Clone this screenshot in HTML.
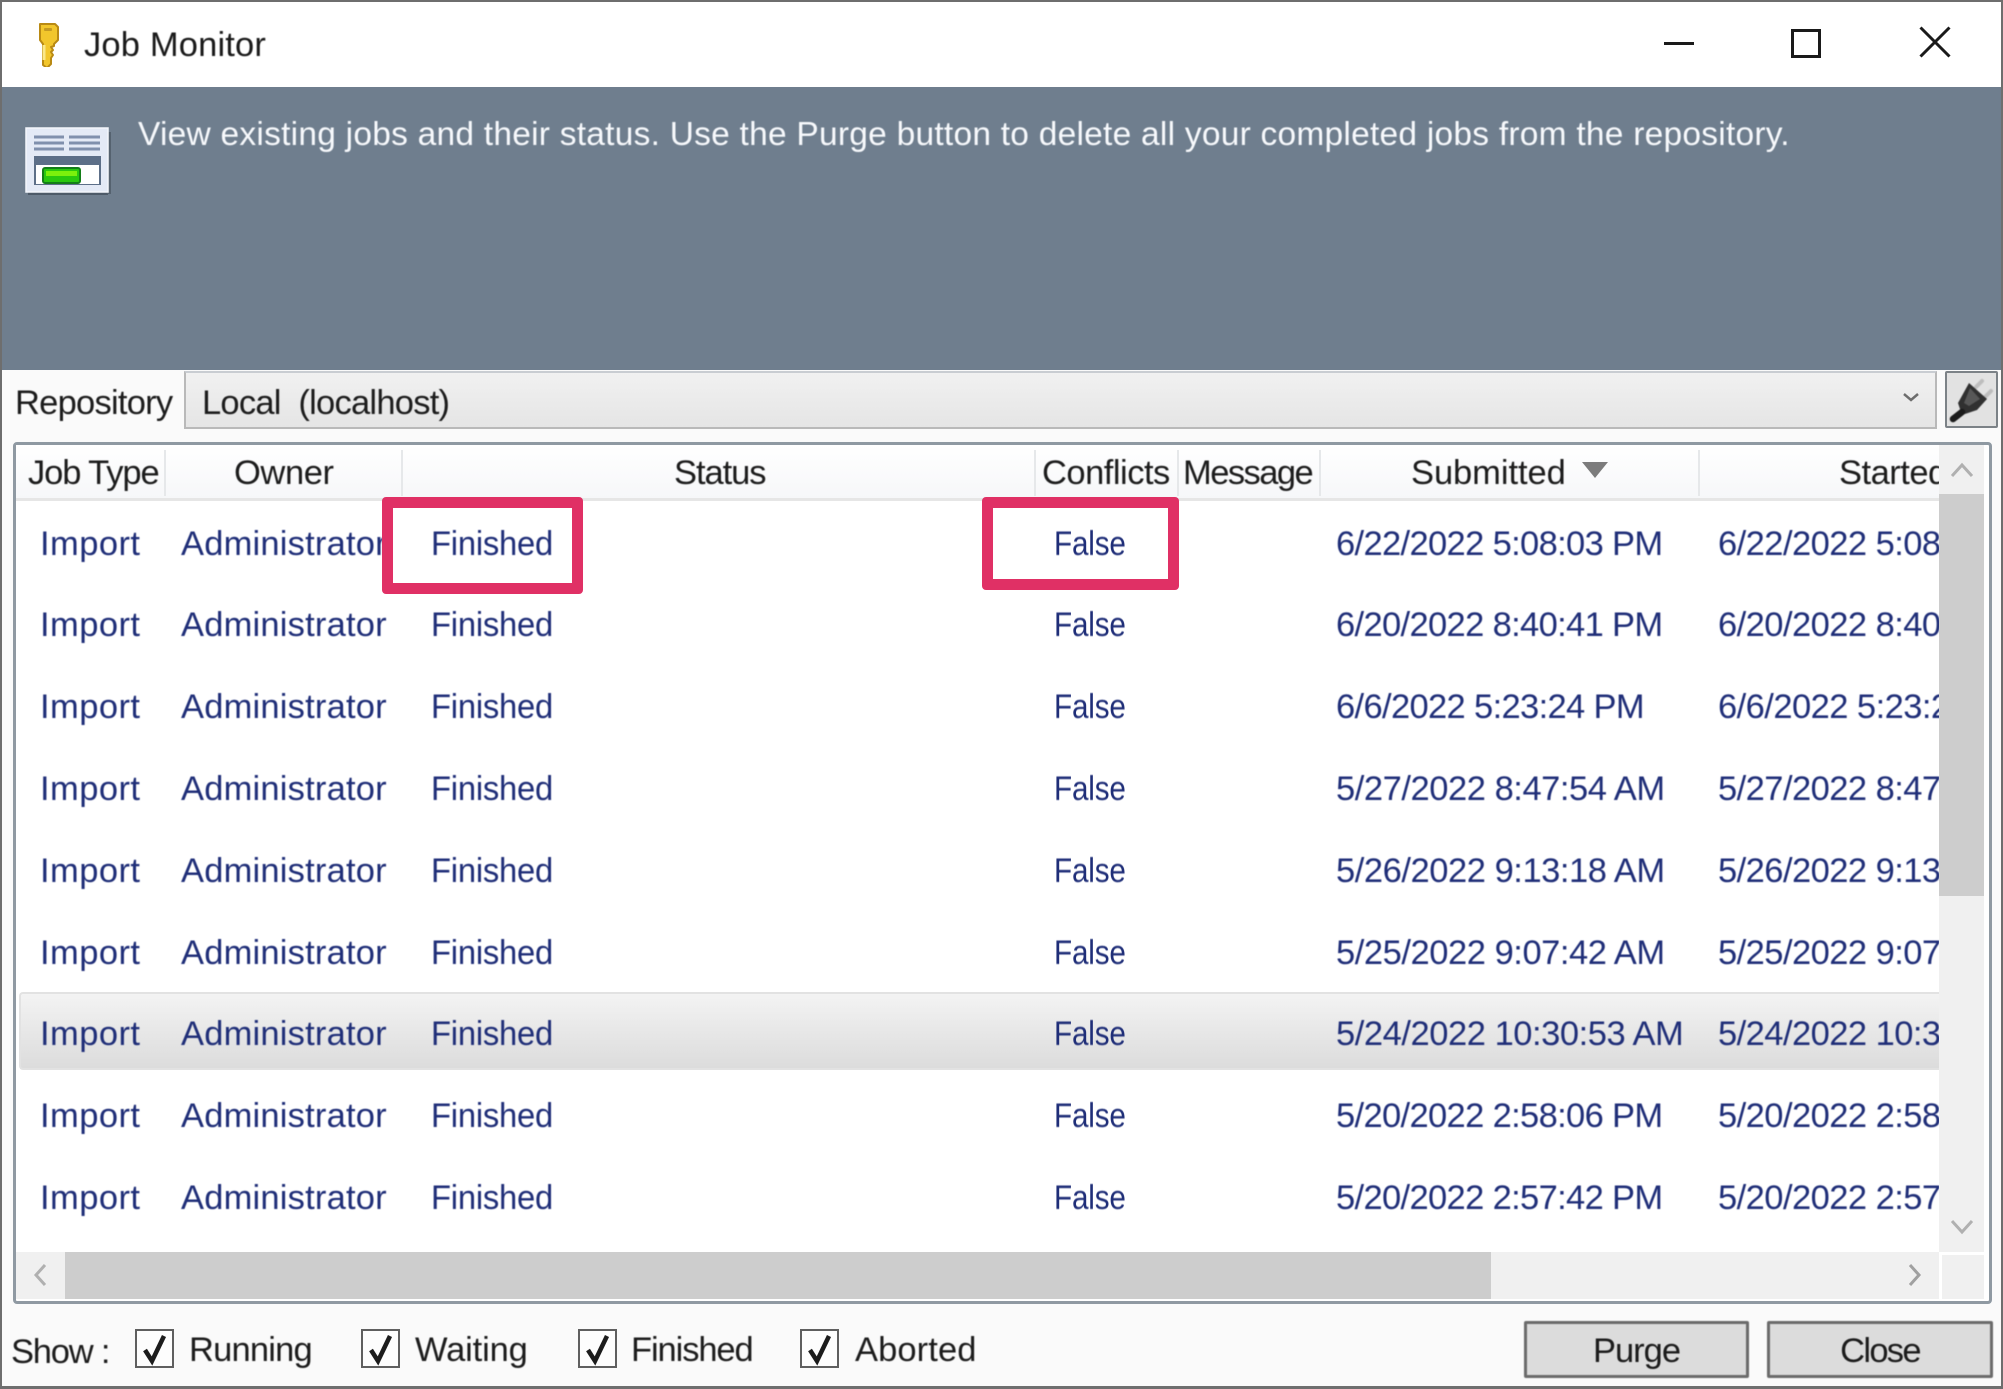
<!DOCTYPE html>
<html lang="en"><head><meta charset="utf-8"><title>Job Monitor</title>
<style>
html,body{margin:0;padding:0;background:#fafafa}
#w{position:relative;width:2003px;height:1389px;overflow:hidden;background:#fafafa;font-family:"Liberation Sans",sans-serif;font-size:34.5px;color:#1c1c1c}
#w div,#w svg{position:absolute}
.t{white-space:nowrap;line-height:44px;height:44px;filter:blur(.45px)}
.r{left:0;width:1939px;height:44px;color:#1f2e78;overflow:hidden}
.r .t{top:1px}
.a{left:40px;letter-spacing:.44px}.b{left:181px;letter-spacing:.2px}.c{left:431px;letter-spacing:-.25px;transform:scaleX(.95);transform-origin:0 50%}.d{left:1054px;letter-spacing:-.2px;transform:scaleX(.86);transform-origin:0 50%}.e{left:1336px;letter-spacing:-.65px}.f{left:1718px;letter-spacing:-.55px}
.m{letter-spacing:-.45px}
.sep{top:450px;width:2px;height:46px;background:#e6e8ea}
.cb{width:35px;height:35px;border:2.5px solid #5f5f5f;background:#fdfdfd;box-sizing:content-box}
.btn{top:1321px;height:51px;background:#dcdcdc;border:3px solid #6b6b6b;border-radius:2px;text-align:center;line-height:54px;filter:blur(.45px)}
.box{border:11px solid #e03065;border-radius:4px;box-sizing:border-box}
</style></head><body>
<div id="w">
<!-- window frame -->
<div style="left:0;top:0;width:2003px;height:2px;background:#6e6e6e"></div>
<div style="left:0;top:2px;width:2003px;height:85px;background:#fff"></div>
<div style="left:0;top:87px;width:2003px;height:283px;background:#6f7e8e"></div>
<!-- key icon -->
<svg style="left:35px;top:21px" width="26" height="46" viewBox="0 0 26 46"><path d="M5 3h15l3 3v13l-4 4v2l-3 1 2 3-2 2 2 3-2 3v6l-4 4-4-3V23l-3-4V6z" fill="#f2c62c" stroke="#b98a14" stroke-width="2" stroke-linejoin="round"/><rect x="9" y="7" width="8" height="3" rx="1" fill="#c49a22"/><path d="M9 24v15" stroke="#fbe88a" stroke-width="3"/></svg>
<div class="t" style="left:84px;top:23px;font-size:34.5px;letter-spacing:.16px;color:#1a1a1a">Job Monitor</div>
<!-- window buttons -->
<svg style="left:1650px;top:15px" width="320" height="55" viewBox="0 0 320 55" fill="none" stroke="#1a1a1a" stroke-width="3"><path d="M14 28.500h30"/><rect x="142.500" y="15.500" width="27" height="26"/><path d="M270.500 12.500l29 29M299.500 12.500l-29 29"/></svg>
<!-- header -->
<svg style="left:25px;top:127px" width="87" height="70" viewBox="0 0 87 70"><rect x="3" y="64" width="80" height="4" fill="#4d5a68"/><rect x="82" y="5" width="4" height="62" fill="#55626f"/><rect x="1" y="1" width="82" height="64" fill="#e4eaf6" stroke="#f3f6fc" stroke-width="1.500"/><path d="M9 10h30M9 16h30M9 22h30M44 10h31M44 16h31M44 22h31" stroke="#8090ad" stroke-width="3"/><rect x="9" y="29" width="67" height="29" fill="#5d6f88"/><rect x="11" y="38" width="63" height="19" fill="#fff"/><rect x="18" y="41" width="37" height="15" rx="2" fill="#29c80f" stroke="#147e18" stroke-width="2"/><rect x="21" y="44" width="31" height="5" fill="#7cf00c"/></svg>
<div class="t" style="left:138px;top:113px;color:#f7f9fc;font-size:33.500px;letter-spacing:.245px;width:1800px">View existing jobs and their status. Use the Purge button to delete all your completed jobs from the repository.</div>
<!-- repository row -->
<div class="t" style="left:15px;top:381px;letter-spacing:-.75px">Repository</div>
<div style="left:184px;top:371px;width:1753px;height:58px;box-sizing:border-box;background:linear-gradient(#f1f1f1,#e5e5e5);border:2px solid #b9b9b9;border-top-color:#c9cdd2"></div>
<div class="t" style="left:202px;top:381px;letter-spacing:-.75px;white-space:pre">Local  (localhost)</div>
<svg style="left:1899px;top:390px" width="24" height="16" viewBox="0 0 24 16" fill="none" stroke="#6d6d6d" stroke-width="2.500"><path d="M5 4l7 6 7-6"/></svg>
<div style="left:1945px;top:371px;width:53px;height:57px;box-sizing:border-box;background:#e2e2e2;border:2.500px solid #7c8287;border-radius:2px"></div>
<svg style="left:1948px;top:374px;filter:blur(.5px)" width="48" height="52" viewBox="0 0 48 52"><path d="M28 13l6-6M37 23l6-6" stroke="#bdbdbd" stroke-width="4" stroke-linecap="round"/><path d="M21 9L39 25 29 36 14 41 10 29z" fill="#303030"/><path d="M22 14L32 25 21 32 16 29z" fill="#575757"/><path d="M14 38L5 45" stroke="#1b1b1b" stroke-width="6.500" stroke-linecap="round"/></svg>
<!-- list -->
<div style="left:13px;top:442px;width:1979px;height:862px;box-sizing:border-box;background:#fff;border:3px solid #8f99a2;border-radius:4px"></div>
<div style="left:16px;top:445px;width:1923px;height:54px;background:linear-gradient(#fff,#f6f7f9)"></div>
<div style="left:16px;top:498px;width:1923px;height:3px;background:#e6e6e6"></div>
<div class="sep" style="left:164px"></div><div class="sep" style="left:401px"></div><div class="sep" style="left:1034px"></div><div class="sep" style="left:1177px"></div><div class="sep" style="left:1319px"></div><div class="sep" style="left:1698px"></div>
<div style="left:0;top:450px;width:1939px;height:46px;overflow:hidden">
<div class="t" style="left:28px;top:1px;letter-spacing:-1.1px">Job Type</div>
<div class="t" style="left:234px;top:1px;letter-spacing:-.4px">Owner</div>
<div class="t" style="left:674px;top:1px;letter-spacing:-1.05px">Status</div>
<div class="t" style="left:1042px;top:1px;letter-spacing:-.5px">Conflicts</div>
<div class="t" style="left:1183px;top:1px;letter-spacing:-1.55px">Message</div>
<div class="t" style="left:1411px;top:1px;letter-spacing:-.07px">Submitted</div>
<div class="t" style="left:1839px;top:1px;letter-spacing:-.5px">Started</div>
</div>
<svg style="left:1581px;top:460px" width="28" height="20" viewBox="0 0 28 20"><path d="M1 2h26L14 18z" fill="#7c7c7c"/></svg>
<!-- selected row -->
<div style="left:19px;top:992px;width:1920px;height:78px;box-sizing:border-box;background:linear-gradient(#f3f3f3,#dcdcdc);border:2px solid #e2e2e2;border-right:0;border-radius:4px 0 0 4px"></div>
<!-- rows -->
<div class="r" style="top:521px"><div class="t a">Import</div><div class="t b">Administrator</div><div class="t c">Finished</div><div class="t d">False</div><div class="t e">6/22/2022 5:08:03 PM</div><div class="t f">6/22/2022 5:08:03 PM</div></div>
<div class="r" style="top:602px"><div class="t a">Import</div><div class="t b">Administrator</div><div class="t c">Finished</div><div class="t d">False</div><div class="t e">6/20/2022 8:40:41 PM</div><div class="t f">6/20/2022 8:40:41 PM</div></div>
<div class="r" style="top:684px"><div class="t a">Import</div><div class="t b">Administrator</div><div class="t c">Finished</div><div class="t d">False</div><div class="t e">6/6/2022 5:23:24 PM</div><div class="t f">6/6/2022 5:23:24 PM</div></div>
<div class="r" style="top:766px"><div class="t a">Import</div><div class="t b">Administrator</div><div class="t c">Finished</div><div class="t d">False</div><div class="t e m">5/27/2022 8:47:54 AM</div><div class="t f">5/27/2022 8:47:54 AM</div></div>
<div class="r" style="top:848px"><div class="t a">Import</div><div class="t b">Administrator</div><div class="t c">Finished</div><div class="t d">False</div><div class="t e m">5/26/2022 9:13:18 AM</div><div class="t f">5/26/2022 9:13:18 AM</div></div>
<div class="r" style="top:930px"><div class="t a">Import</div><div class="t b">Administrator</div><div class="t c">Finished</div><div class="t d">False</div><div class="t e m">5/25/2022 9:07:42 AM</div><div class="t f">5/25/2022 9:07:42 AM</div></div>
<div class="r" style="top:1011px"><div class="t a">Import</div><div class="t b">Administrator</div><div class="t c">Finished</div><div class="t d">False</div><div class="t e m">5/24/2022 10:30:53 AM</div><div class="t f">5/24/2022 10:30:53 AM</div></div>
<div class="r" style="top:1093px"><div class="t a">Import</div><div class="t b">Administrator</div><div class="t c">Finished</div><div class="t d">False</div><div class="t e">5/20/2022 2:58:06 PM</div><div class="t f">5/20/2022 2:58:06 PM</div></div>
<div class="r" style="top:1175px"><div class="t a">Import</div><div class="t b">Administrator</div><div class="t c">Finished</div><div class="t d">False</div><div class="t e">5/20/2022 2:57:42 PM</div><div class="t f">5/20/2022 2:57:42 PM</div></div>
<!-- vertical scrollbar -->
<div style="left:1939px;top:445px;width:45px;height:807px;background:#f0f0f0"></div>
<div style="left:1939px;top:494px;width:45px;height:402px;background:#cdcdcd"></div>
<svg style="left:1949px;top:458px" width="26" height="22" viewBox="0 0 26 22" fill="none" stroke="#b0b0b0" stroke-width="3"><path d="M3 18L13 7l10 11"/></svg>
<svg style="left:1949px;top:1217px" width="26" height="22" viewBox="0 0 26 22" fill="none" stroke="#b0b0b0" stroke-width="3"><path d="M3 4l10 11L23 4"/></svg>
<!-- horizontal scrollbar -->
<div style="left:16px;top:1252px;width:1923px;height:47px;background:#f0f0f0"></div>
<div style="left:65px;top:1252px;width:1426px;height:47px;background:#cdcdcd"></div>
<div style="left:1942px;top:1255px;width:42px;height:44px;background:#f0f0f0"></div>
<svg style="left:30px;top:1262px" width="22" height="26" viewBox="0 0 22 26" fill="none" stroke="#b0b0b0" stroke-width="3"><path d="M15 3L6 13l9 10"/></svg>
<svg style="left:1903px;top:1262px" width="22" height="26" viewBox="0 0 22 26" fill="none" stroke="#a0a0a0" stroke-width="3"><path d="M7 3l9 10-9 10"/></svg>
<!-- highlight boxes -->
<div class="box" style="left:382px;top:497px;width:201px;height:97px"></div>
<div class="box" style="left:982px;top:497px;width:197px;height:93px"></div>
<!-- footer -->
<div class="t" style="left:11px;top:1330px;letter-spacing:-1.2px">Show :</div>
<div class="cb" style="left:135px;top:1329px"></div>
<div class="cb" style="left:361px;top:1329px"></div>
<div class="cb" style="left:578px;top:1329px"></div>
<div class="cb" style="left:800px;top:1329px"></div>
<svg style="left:135px;top:1329px" width="40" height="40" viewBox="0 0 40 40" fill="none" stroke="#1c1c1c" stroke-width="4.500"><path d="M10 21l7 11 12-25"/></svg>
<svg style="left:361px;top:1329px" width="40" height="40" viewBox="0 0 40 40" fill="none" stroke="#1c1c1c" stroke-width="4.500"><path d="M10 21l7 11 12-25"/></svg>
<svg style="left:578px;top:1329px" width="40" height="40" viewBox="0 0 40 40" fill="none" stroke="#1c1c1c" stroke-width="4.500"><path d="M10 21l7 11 12-25"/></svg>
<svg style="left:800px;top:1329px" width="40" height="40" viewBox="0 0 40 40" fill="none" stroke="#1c1c1c" stroke-width="4.500"><path d="M10 21l7 11 12-25"/></svg>
<div class="t" style="left:189px;top:1328px;letter-spacing:-.8px">Running</div>
<div class="t" style="left:415px;top:1328px;letter-spacing:-.15px">Waiting</div>
<div class="t" style="left:631px;top:1328px;letter-spacing:-1.1px">Finished</div>
<div class="t" style="left:855px;top:1328px;letter-spacing:.1px">Aborted</div>
<div class="btn" style="left:1524px;width:219px;letter-spacing:-1px">Purge</div>
<div class="btn" style="left:1767px;width:220px;letter-spacing:-1.7px">Close</div>
<!-- outer edges -->
<div style="left:0;top:0;width:2px;height:1389px;background:#6e6e6e"></div>
<div style="left:2001px;top:0;width:2px;height:1389px;background:#6e6e6e"></div>
<div style="left:0;top:1386px;width:2003px;height:3px;background:#6e6e6e"></div>
</div>
</body></html>
